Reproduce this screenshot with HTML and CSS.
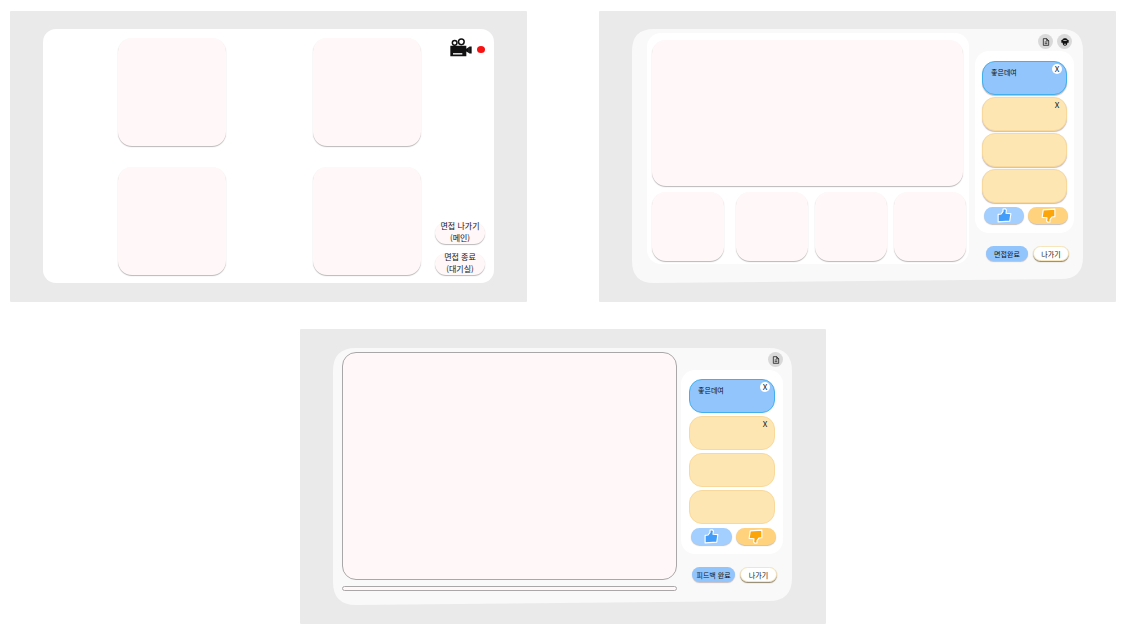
FILE: index.html
```html
<!DOCTYPE html>
<html lang="ko">
<head>
<meta charset="utf-8">
<meta name="viewport" content="width=device-width, initial-scale=1">
<title>면접</title>
<link rel="stylesheet" href="styles.css">
</head>
<body>
<svg class="defs" aria-hidden="true">
  <symbol id="doc" viewBox="0 0 24 24">
    <path d="M4 2h10l6 6v14H4z M14 2v6h6 M8 12h8M8 17h8" fill="none" stroke="currentColor" stroke-width="2.2"/>
  </symbol>
  <symbol id="person" viewBox="0 0 24 24">
    <path d="M4 6c0-3 4-5 8-5s8 2 8 5h3v8h-4c0 5-3 9-7 9s-7-4-7-9H1V6z" fill="currentColor"/>
    <path d="M7 7h10v2H7zM9 17h6l-1 3h-4z" fill="#ddd"/>
  </symbol>
  <symbol id="thumb" viewBox="0 0 40 40">
    <path d="M3 17l8-1 5-7V3l6-1 3 3-1 9 13 1-3 20-31 2z" fill="currentColor" stroke="#fff" stroke-width="3" stroke-linejoin="round"/>
  </symbol>
</svg>
<main class="board">
  <section class="frame">
    <div class="panel room">
      <div class="room-tiles">
        <div class="tile square"></div><div class="tile square"></div>
        <div class="tile square"></div><div class="tile square"></div>
      </div>
      <aside class="room-side">
        <div class="recording">
          <svg class="camera" viewBox="0 0 66 56" role="img" aria-label="녹화 중">
            <circle cx="14" cy="14" r="7" fill="none" stroke="#111" stroke-width="4.5"/>
            <circle cx="34" cy="11" r="8.500" fill="none" stroke="#111" stroke-width="4.5"/>
            <path d="M1 23h48v9l10-7h6v21h-6l-10-6v14H1z" fill="#111"/>
            <path d="M9 45h28v4H9z" fill="#fff"/>
            <path d="M57 27v17" stroke="#777" stroke-width="1"/>
          </svg>
          <span class="dot"></span>
        </div>
        <div class="room-actions">
          <button class="exit" type="button">면접 나가기<br>(메인)</button>
          <button class="exit" type="button">면접 종료<br>(대기실)</button>
        </div>
      </aside>
    </div>
  </section>

  <section class="frame">
    <div class="panel session">
      <svg class="backdrop" viewBox="0 0 451 254" preserveAspectRatio="none" aria-hidden="true"><path d="M22 0H429Q451 0 451 22V228Q451 250 429 250L22 254Q0 254 0 232V22Q0 0 22 0Z"/></svg>
      <div class="stage">
        <div class="tile speaker"></div>
        <div class="people">
          <div class="tile person"></div><div class="tile person"></div><div class="tile person"></div><div class="tile person"></div>
        </div>
      </div>
      <aside class="side">
        <div class="tools">
          <button class="tool" type="button" aria-label="문서"><svg><use href="#doc"/></svg></button>
          <button class="tool" type="button" aria-label="참가자"><svg><use href="#person"/></svg></button>
        </div>
        <div class="card">
          <div class="notes">
            <div class="note active"><span>좋은데여</span><button class="close round" type="button">X</button></div>
            <div class="note"><button class="close" type="button">X</button></div>
            <div class="note"></div>
            <div class="note"></div>
          </div>
          <div class="votes">
            <button class="vote up" type="button" aria-label="좋아요"><svg><use href="#thumb"/></svg></button>
            <button class="vote down" type="button" aria-label="싫어요"><svg><use href="#thumb"/></svg></button>
          </div>
        </div>
        <div class="actions">
          <button class="action primary" type="button">면접완료</button>
          <button class="action plain" type="button">나가기</button>
        </div>
      </aside>
    </div>
  </section>

  <section class="frame feedback">
    <div class="panel session replay">
      <svg class="backdrop" viewBox="0 0 459 257" preserveAspectRatio="none" aria-hidden="true"><path d="M23 0H436Q459 0 459 23V230Q459 253 436 253L23 257Q0 257 0 234V23Q0 0 23 0Z"/></svg>
      <div class="player">
        <div class="screen"></div>
        <div class="track"></div>
      </div>
      <aside class="side">
        <div class="tools">
          <button class="tool" type="button" aria-label="문서"><svg><use href="#doc"/></svg></button>
        </div>
        <div class="card">
          <div class="notes">
            <div class="note active"><span>좋은데여</span><button class="close round" type="button">X</button></div>
            <div class="note"><button class="close" type="button">X</button></div>
            <div class="note"></div>
            <div class="note"></div>
          </div>
          <div class="votes">
            <button class="vote up" type="button" aria-label="좋아요"><svg><use href="#thumb"/></svg></button>
            <button class="vote down" type="button" aria-label="싫어요"><svg><use href="#thumb"/></svg></button>
          </div>
        </div>
        <div class="actions">
          <button class="action primary" type="button">피드백 완료</button>
          <button class="action plain" type="button">나가기</button>
        </div>
      </aside>
    </div>
  </section>
</main>
</body>
</html>
```
FILE: styles.css
```css
* { box-sizing: border-box; }

body {
  margin: 0;
  background: #fff;
  color: #111;
  font-family: "Noto Sans CJK KR", sans-serif;
  font-size: 7px;
}

button {
  margin: 0;
  padding: 0;
  border: 0;
  color: inherit;
  font: inherit;
}

.defs { display: none; }

.board {
  display: grid;
  grid-template-columns: 1fr 1fr;
  gap: 27px 72px;
  padding: 11px 15px 12px 10px;
}

.frame {
  padding: 18px 33px 19px;
  border-radius: 1px;
  background: #eaeaea;
}

.feedback {
  grid-column: 1 / -1;
  justify-self: center;
  width: calc(50% - 27px);
  padding: 19px 34px 19px 33px;
}

.tile {
  border-radius: 14px;
  background: #fff7f8;
  box-shadow: 0 1px 1px #bbb8b9;
}

/* Waiting room */
.room {
  display: flex;
  justify-content: space-between;
  padding: 9px 9px 8px 75px;
  border-radius: 13px;
  background: #fff;
}

.room-tiles {
  display: grid;
  grid-template-columns: 108px 108px;
  gap: 21px 87px;
}

.square { height: 108px; }

.room-side {
  display: flex;
  flex-direction: column;
  justify-content: space-between;
  width: 50px;
}

.recording {
  display: flex;
  align-items: center;
  justify-content: flex-end;
  gap: 5px;
}

.camera { width: 22px; height: 19px; }

.dot {
  width: 8px;
  height: 7px;
  margin-top: 4px;
  border-radius: 50%;
  background: #f91111;
}

.room-actions { display: grid; gap: 9px; }

.exit {
  display: flex;
  align-items: center;
  justify-content: center;
  height: 22px;
  padding-bottom: 2px;
  border-radius: 11px;
  background: #fff7f8;
  box-shadow: 0 1px 1px #bbb8b9;
  font-size: 8px;
  line-height: 12px;
  white-space: nowrap;
}

/* Interview session */
.session {
  position: relative;
  display: grid;
  grid-template-columns: 1fr 99px;
  column-gap: 6px;
  align-items: start;
  min-height: 254px;
  padding: 4px 9px 0 15px;
}

.backdrop {
  position: absolute;
  inset: 0;
  width: 100%;
  height: 100%;
  fill: #f9f9f9;
}

.stage,
.player,
.side { position: relative; }

.stage {
  padding: 7px 3px 3px 5px;
  border-radius: 14px;
  background: #fff;
}

.speaker { height: 146px; margin-right: 3px; }

.people {
  display: grid;
  grid-template-columns: 84fr 79fr 79fr 72fr;
  margin-top: 6px;
}

.person { width: 72px; height: 69px; }

.side { padding-top: 1px; }

.tools {
  display: flex;
  justify-content: flex-end;
  gap: 4px;
  padding-right: 2px;
}

.tool {
  display: grid;
  place-items: center;
  width: 15px;
  height: 15px;
  border-radius: 50%;
  background: #d9d9d9;
}

.tool svg { width: 8px; height: 8px; }

.card {
  margin-top: 2px;
  padding: 10px 7px 8px;
  border-radius: 14px;
  background: #fff;
}

.notes { display: grid; gap: 2px; }

.note {
  display: flex;
  align-items: flex-start;
  height: 34px;
  padding: 2px 4px 2px 8px;
  border: 1px solid #f8d99b;
  border-radius: 13px;
  background: #fee6b3;
  box-shadow: 0 1px 1px #c9bec3;
}

.note span { margin-top: 3px; line-height: 10px; }

.active {
  border-color: #41b0ed;
  background: #93c5fd;
}

.close {
  width: 10px;
  height: 10px;
  margin-left: auto;
  border-radius: 50%;
  background: none;
  font-size: 8px;
  line-height: 10px;
  text-align: center;
}

.round { background: #fff; }

.votes {
  display: grid;
  grid-template-columns: 1fr 1fr;
  gap: 4px;
  margin: 4px -1px 0 2px;
}

.vote {
  display: grid;
  place-items: center;
  height: 17px;
  margin-bottom: 1px;
  border-radius: 9px;
  box-shadow: 0 1px 1px #c5c0c0;
}

.vote svg { width: 15px; height: 15px; }
.up { background: #a2cfff; color: #419cfa; }
.down { background: #ffd27e; color: #fba50a; }
.down svg { transform: rotate(180deg); }

.actions {
  display: grid;
  grid-template-columns: 42fr 36fr;
  gap: 5px;
  margin-top: 13px;
  padding: 0 5px 0 11px;
}

.action {
  height: 15px;
  border-radius: 8px;
  line-height: 14px;
  white-space: nowrap;
}

.primary { background: #93c5fd; box-shadow: 0 1px 1px #c5bec3; }

.plain {
  border: 1px solid #f7e5bc;
  background: #fff;
  box-shadow: 0 1px 1px #91856c;
  line-height: 12px;
}

/* Feedback replay */
.replay {
  grid-template-columns: 1fr 102px;
  column-gap: 4px;
  min-height: 257px;
  padding: 4px 9px 0;
}

.screen {
  height: 228px;
  border: 1px solid #aaa7a8;
  border-radius: 14px;
  background: #fff7f8;
}

.track {
  height: 5px;
  margin-top: 6px;
  border: 1px solid #aaa7a8;
  border-radius: 3px;
  background: #fff7f8;
}

.replay .side { padding-top: 0; }
.replay .tools { padding-right: 0; }
.replay .card { margin-top: 3px; padding: 9px 8px 8px; }
.replay .notes { gap: 3px; }
.replay .note { box-shadow: none; }
.replay .actions { padding-right: 6px; }
```
